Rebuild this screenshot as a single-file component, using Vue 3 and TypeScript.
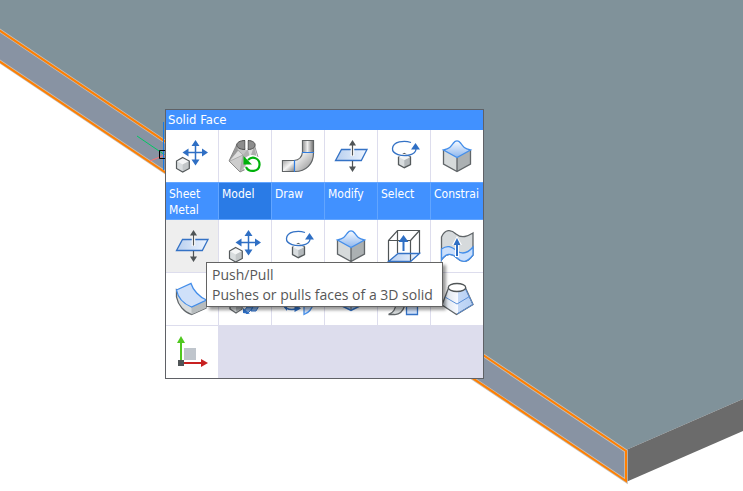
<script setup lang="ts">
interface Command {
  icon: string
  label: string
}

const faceCommands: Command[] = [
  { icon: 'move', label: 'Move' },
  { icon: 'loft', label: 'Rebuild loft' },
  { icon: 'elbow', label: 'Bend' },
  { icon: 'pushpull', label: 'Push/Pull' },
  { icon: 'rotate', label: 'Rotate' },
  { icon: 'dome', label: 'Smooth' },
]

const tabs: string[] = ['Sheet Metal', 'Model', 'Draw', 'Modify', 'Select', 'Constrai']
const activeTab = 'Model'

const modelCommands: Command[] = [
  { icon: 'pushpull', label: 'Push/Pull' },
  { icon: 'move', label: 'Move' },
  { icon: 'rotate', label: 'Rotate' },
  { icon: 'dome', label: 'Smooth' },
  { icon: 'extrude', label: 'Extrude' },
  { icon: 'surface', label: 'Offset surface' },
  { icon: 'sheet', label: 'Curved sheet' },
  { icon: 'align', label: 'Align' },
  { icon: 'revolve', label: 'Revolve' },
  { icon: 'imprint', label: 'Imprint' },
  { icon: 'section', label: 'Section' },
  { icon: 'frustum', label: 'Taper' },
  { icon: 'axes', label: 'Coordinate system' },
]
const hovered = 0
</script>

<template>
  <main class="viewport">
    <svg class="scene" viewBox="0 0 743 491" preserveAspectRatio="xMidYMid slice" aria-hidden="true">
      <path d="M0 0H743V399L626 450L0 30Z" fill="#80929a" />
      <path d="M626 450L743 399V431L626 482Z" fill="#6b6b6b" />
      <path d="M0 31L626 451V481L0 61Z" fill="#8893a3" />
      <path d="M-4 28L626 451V481L-4 59Z" fill="none" stroke="#c9bfb4" stroke-width="3.600" />
      <path d="M-4 28L626 451V481L-4 59Z" fill="none" stroke="#ff7f00" stroke-width="2" />
      <path d="M137 136L165 155" stroke="#00c864" />
      <path d="M150 161L165 155" stroke="#ff7070" />
      <path d="M163.500 122V170" stroke="#1478e6" />
      <path d="M168 150.500H159.500V158.500H168" fill="none" stroke="#000" />
    </svg>

    <svg class="defs" aria-hidden="true">
      <defs>
        <linearGradient id="plane" x1="0" x2="1">
          <stop offset="0" stop-color="#b7ceee" />
          <stop offset="1" stop-color="#eef5ff" />
        </linearGradient>
        <linearGradient id="bump" x1="0" y1="0" x2="0" y2="1">
          <stop offset="0" stop-color="#f8fbff" />
          <stop offset="1" stop-color="#8db6ee" />
        </linearGradient>
        <linearGradient id="metal" x1="0" y1="0" x2="1" y2="1">
          <stop offset="0" stop-color="#aaa" />
          <stop offset=".5" stop-color="#f5f5f5" />
          <stop offset="1" stop-color="#888" />
        </linearGradient>
        <linearGradient id="steel" x1="0" x2="1">
          <stop offset="0" stop-color="#999" />
          <stop offset=".45" stop-color="#eee" />
          <stop offset="1" stop-color="#777" />
        </linearGradient>
        <linearGradient id="cone" x1="0" x2="1">
          <stop offset="0" stop-color="#d5dde6" />
          <stop offset=".5" stop-color="#f6f9ff" />
          <stop offset=".51" stop-color="#c5d9f6" />
          <stop offset="1" stop-color="#b5cff4" />
        </linearGradient>
      </defs>

      <symbol id="move" viewBox="0 0 52 52">
        <path d="M29.500 14V31M20 22.500H38" stroke="#2f6fc4" stroke-width="1.500" />
        <path d="M29.500 10L33.500 16H25.500ZM29.500 35.500L33.500 29.500H25.500ZM16.500 22.500L22.500 18.500V26.500ZM42 22.500L36 18.500V26.500Z" fill="#2f6fc4" />
        <path d="M16.700 27.500L23.300 31V38.500L16.700 42L10.500 38.500V31Z" fill="#d9dddf" />
        <path d="M16.700 27.500L23.300 31L16.700 34.500L10.500 31Z" fill="#f4f5f6" />
        <path d="M16.700 34.500L23.300 31V38.500L16.700 42Z" fill="#c2c6c8" />
        <path d="M16.700 27.500L23.300 31V38.500L16.700 42L10.500 38.500V31Z" fill="none" stroke="#555a5c" stroke-width="1.200" />
      </symbol>

      <symbol id="loft" viewBox="0 0 52 52">
        <path d="M18 15L10 31L21 42L39 34L35 15L31 18H22Z" fill="#c4c4c4" />
        <path d="M18 15L10 31L19 21Z" fill="#999" />
        <path d="M24 25L21 42L31 29L29 19Z" fill="#b2b2b2" />
        <path d="M35 15L31 26L39 34Z" fill="#adadad" />
        <path d="M19 21L11 31L24 25Z" fill="#dedede" />
        <path d="M11 31L24 25L21 42Z" fill="#cdcdcd" />
        <path d="M29 19L35 16L31 28Z" fill="#ddd" />
        <path d="M18 14L10 31L21 42L29 38M35 14L39 27" fill="none" stroke="#777" stroke-width=".8" />
        <path d="M19 20L24 25L21 42M24 25L11 31" fill="none" stroke="#999" stroke-width=".6" />
        <path d="M26 10.500C15 10.500 15 19.500 26 19.500ZM29 10.500C38.500 10.500 38.500 19.500 29 19.500Z" fill="#8d8d8d" stroke="#505050" />
        <path d="M26.500 10H28.500V20H26.500Z" fill="#fff" />
        <path d="M29 29C34 24 41 28 40.500 35C40 42 30 43 26.500 36L29 31Z" fill="#fff" />
        <path d="M27.500 30C33 24 41 29 40.500 35C40 42 30 44 26.500 37" fill="none" stroke="#fff" stroke-width="4.500" />
        <path d="M29 30C34 25 41 29 40.500 35C40 42 30 43 27 37" fill="none" stroke="#00b10b" stroke-width="2.200" />
        <path d="M24.500 26V34.500H33Z" fill="#00b10b" />
      </symbol>

      <symbol id="elbow" viewBox="0 0 52 52">
        <path d="M30.500 10.500H41.500V23C41.500 34 34 41.500 23 41.500H10.500V30.500H22C27 30 30 27 30.500 22Z" fill="url(#metal)" stroke="#606466" stroke-width="1.200" />
        <path d="M31 11H41V22H31Z" fill="url(#steel)" />
        <path d="M11 31H22V41H11Z" fill="url(#metal)" />
        <path d="M30 22.500H42M22.500 30V42" stroke="#2f7ce0" stroke-width="1.200" />
      </symbol>

      <symbol id="pushpull" viewBox="0 0 52 52">
        <path d="M16.500 19.500H42L36.300 30.500H10.500Z" fill="url(#plane)" stroke="#3472c5" stroke-width="1.300" />
        <path d="M27.500 13V26" stroke="#fff" stroke-width="3.500" />
        <path d="M27.500 14V25.500M27.500 31V38" stroke="#505557" stroke-width="1.200" />
        <path d="M27.500 10L31 15.500H24ZM27.500 42L31 36.500H24Z" fill="#505557" />
      </symbol>

      <symbol id="rotate" viewBox="0 0 52 52">
        <path d="M26.300 23.500L32.500 27V34.500L26.300 37.700L20.500 34.500V27Z" fill="#d9dddf" />
        <path d="M26.300 30L32.500 27V34.500L26.300 37.700Z" fill="#b3b8bb" />
        <path d="M20.500 27L26.300 24L32.500 27L26.300 30Z" fill="#f3f4f4" />
        <path d="M26.300 23.500L32.500 27V34.500L26.300 37.700L20.500 34.500V27Z" fill="none" stroke="#555a5c" stroke-width="1.300" />
        <path d="M33 12.500C26 10 15 11.500 14.500 18.500C14 24 24 27 31.500 25C35 24 38 22 38 19" fill="none" stroke="#fff" stroke-width="2.800" />
        <path d="M33 12.500C26 10 15 11.500 14.500 18.500C14 24 24 27 31.500 25C35 24 38 22 38 19" fill="none" stroke="#3472c5" stroke-width="1.300" />
        <path d="M37.500 13L42 19.500H33Z" fill="#2f6fc4" />
      </symbol>

      <symbol id="dome" viewBox="0 0 52 52">
        <path d="M12.500 20L26 27.500V41.500L12.500 34Z" fill="#d6dadb" />
        <path d="M39.500 20L26 27.500V41.500L39.500 34Z" fill="#abb0b2" />
        <path d="M12.500 20V34L26 41.500L39.500 34V20M26 28V41" fill="none" stroke="#606568" stroke-width="1.300" />
        <path d="M12.500 20C19 18.500 20 16.500 22.500 13C24.500 10.200 27.500 10.200 29.500 13C32 16.500 33 18.500 39.500 20L26 27.500Z" fill="url(#bump)" stroke="#448eea" stroke-width="1.300" />
      </symbol>

      <symbol id="extrude" viewBox="0 0 52 52">
        <path d="M10.500 41.500L20 33.500H41.500L32.500 41.500Z" fill="url(#plane)" />
        <path d="M19.500 10.500V33M10.500 20.500H32.500V41.500M10.500 41.500V20.500L19.500 10.500H41.500V33M32.500 20.500L41.500 10.500" fill="none" stroke="#505557" stroke-width="1.200" />
        <path d="M10.500 41.500L20 33.500H41.500L32.500 41.500Z" fill="none" stroke="#3472c5" stroke-width="1.300" />
        <path d="M25.500 15L30.500 22H26.500V31H24.500V22H20.500Z" fill="#2f6fc4" />
      </symbol>

      <symbol id="surface" viewBox="0 0 52 52">
        <path d="M10.500 17C14 9 20 9 25 14C31 19 37 16 42 13V35C36 43 31 43 26 38C20 32 14 34 10.500 40Z" fill="#d6dadc" stroke="#606568" stroke-width="1.300" />
        <path d="M10.500 29C16 25 20 26 26 31C32 35 37 33 42 27V35C36 43 31 43 26 38C20 32 14 34 10.500 40Z" fill="#cbdffb" stroke="#448eea" stroke-width="1.300" />
        <path d="M26 16L31 25H28V37H24V25H21Z" fill="#fff" />
        <path d="M26 18L29.500 25H27V36H25V25H22.500Z" fill="#2f6fc4" />
      </symbol>

      <symbol id="sheet" viewBox="0 0 52 52">
        <path d="M10.500 17V24C12 32 18 39 25.500 41.500L40 35V27L25.500 33.500Z" fill="#d8dcde" stroke="#606568" stroke-width="1.300" />
        <path d="M25.500 34V41.500L40 35V27Z" fill="#b7bcbe" />
        <path d="M10.500 17L25 10.500C27 17 33 24 40.500 27L25.500 34C18 31 12 25 10.500 17Z" fill="#cfe0f9" stroke="#448eea" stroke-width="1.300" />
      </symbol>

      <symbol id="align" viewBox="0 0 52 52">
        <path d="M11 22L17 18L23 22V36L17 40L11 36Z" fill="#d6dadb" stroke="#606568" stroke-width="1.300" />
        <path d="M17 26V39L22.500 36V23Z" fill="#abb0b2" />
        <path d="M28 34H34L31 38L28 41L25 38ZM35 31H41L37 38H32Z" fill="#7ba7df" stroke="#2f6fc4" />
        <path d="M24 35L31 41L24 40Z" fill="#2f6fc4" />
      </symbol>

      <symbol id="revolve" viewBox="0 0 52 52">
        <path d="M11 31C14 38 22 37 28 35" fill="none" stroke="#2f6fc4" stroke-width="1.600" />
        <path d="M10.500 32.500L15 32V38ZM22.500 32L29 35.500L22.500 39Z" fill="#2f6fc4" />
        <path d="M32 18V41.500C36 40 40 36 41.500 30Z" fill="#cfe0f9" stroke="#448eea" stroke-width="1.300" />
      </symbol>

      <symbol id="imprint" viewBox="0 0 52 52">
        <path d="M13 18L26 11L39 18V31L26 37.500L13 31Z" fill="#aecbef" stroke="#2f6fc4" stroke-width="1.500" />
        <path d="M26 25V37" stroke="#606568" />
      </symbol>

      <symbol id="section" viewBox="0 0 52 52">
        <path d="M10.500 41.500C16 40 18 35 19 28L27 32C25 38 22 42 16 41.500Z" fill="#d6dadb" stroke="#606568" stroke-width="1.300" />
        <path d="M28.500 28H39.500V41.500H28.500Z" fill="#cfe0f9" stroke="#3472c5" stroke-width="1.300" />
      </symbol>

      <symbol id="frustum" viewBox="0 0 52 52">
        <path d="M17.500 15L11 32L25.500 41.500L42 31.500L34.500 15Z" fill="url(#cone)" stroke="#606568" stroke-width="1.300" />
        <path d="M14 24L26 31L38.500 23.500M34.500 16L42 31.500L26 41" fill="none" stroke="#5a8fd8" />
        <ellipse cx="26" cy="14.500" rx="8.700" ry="4" fill="#fff" stroke="#505557" stroke-width="1.300" />
      </symbol>

      <symbol id="axes" viewBox="0 0 52 52">
        <path d="M18 22H30V34H18Z" fill="#bfc5cc" />
        <path d="M15 36V15" stroke="#50c820" stroke-width="2" />
        <path d="M15 10L19 17H11Z" fill="#50c820" />
        <path d="M16 37H37" stroke="#c82020" stroke-width="2" />
        <path d="M42 37L35 33V41Z" fill="#c82020" />
        <path d="M12 34H18V40H12Z" fill="#505557" />
      </symbol>
    </svg>

    <section class="quad" aria-label="Solid Face">
      <h1 class="title">Solid Face</h1>
      <div class="grid">
        <button v-for="c in faceCommands" :key="c.icon" class="cell" type="button" :aria-label="c.label">
          <svg class="icon"><use :href="'#' + c.icon" /></svg>
        </button>
      </div>
      <div class="tabs">
        <button
          v-for="t in tabs"
          :key="t"
          class="tab"
          :class="{ active: t === activeTab }"
          type="button"
        >{{ t }}</button>
      </div>
      <div class="grid">
        <button
          v-for="(c, i) in modelCommands"
          :key="c.icon"
          class="cell"
          :class="{ hover: i === hovered }"
          type="button"
          :aria-label="c.label"
        >
          <svg class="icon"><use :href="'#' + c.icon" /></svg>
        </button>
      </div>
      <div class="tooltip" role="tooltip">
        <div>Push/Pull</div>
        <div>Pushes or pulls faces of a 3D solid</div>
      </div>
    </section>
  </main>
</template>

<style>
body {
  margin: 0;
}
</style>

<style scoped>
.viewport {
  position: relative;
  min-height: 100vh;
  overflow: hidden;
  background: #fff;
  font-family: "DejaVu Sans Condensed", "Noto Sans", sans-serif;
}
.scene {
  position: absolute;
  inset: 0;
  width: 100%;
  height: 100%;
}
.defs {
  position: absolute;
  width: 0;
  height: 0;
}
.quad {
  position: absolute;
  left: 165px;
  top: 109px;
  border: 1px solid #5f6166;
  background: #dddded;
}
.title {
  margin: 0;
  padding: 0 2px;
  background: #4191ff;
  color: #fff;
  font-size: 13px;
  font-weight: 400;
  line-height: 20px;
}
.grid {
  display: grid;
  grid-template-columns: repeat(6, 52px);
  gap: 1px;
}
.cell {
  display: block;
  padding: 0;
  border: 0;
  background: #fff;
}
.cell.hover {
  background: #eee;
}
.icon {
  display: block;
  width: 52px;
  height: 52px;
}
.tabs {
  display: grid;
  grid-template-columns: repeat(6, 52px);
  gap: 1px;
  height: 36px;
  padding: 1px 0;
  background: #62a5ff;
}
.tab {
  display: flex;
  align-items: flex-start;
  min-width: 0;
  padding: 3px 0 0 3px;
  border: 0;
  background: #4191ff;
  color: #fff;
  font-family: inherit;
  font-size: 12px;
  line-height: 16px;
  text-align: left;
}
.tab.active {
  background: #2a7be6;
}
.tooltip {
  position: absolute;
  left: 40px;
  top: 152px;
  padding: 2px 9px 1px 5px;
  border: 1px solid #646464;
  background: #fff;
  box-shadow: 3px 3px 3px rgba(0, 0, 0, 0.4);
  color: #575757;
  font-family: "Open Sans", "Noto Sans", sans-serif;
  font-size: 14px;
  line-height: 20px;
  white-space: nowrap;
}
</style>
